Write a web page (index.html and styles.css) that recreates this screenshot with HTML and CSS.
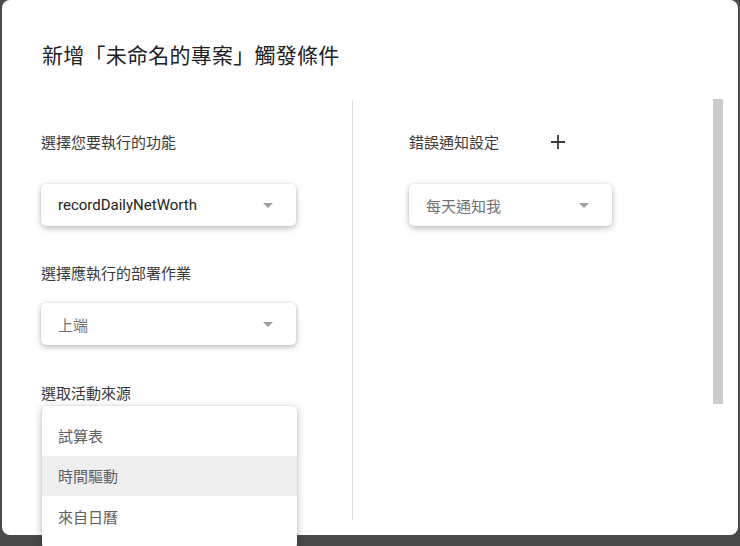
FILE: index.html
```html
<!DOCTYPE html>
<html lang="zh-Hant">
<head>
<meta charset="utf-8">
<link rel="stylesheet" href="styles.css">
</head>
<body>
<div class="dialog">
  <h1 class="title">新增「未命名的專案」觸發條件</h1>
  <div class="body">
    <div class="col left">
      <div class="label l1">選擇您要執行的功能</div>
      <div class="select s1"><span class="value dark">recordDailyNetWorth</span><span class="arrow"></span></div>
      <div class="label l2">選擇應執行的部署作業</div>
      <div class="select s2"><span class="value">上端</span><span class="arrow"></span></div>
      <div class="label l3">選取活動來源</div>
      <div class="menu-anchor">
        <div class="menu">
          <div class="item">試算表</div>
          <div class="item active">時間驅動</div>
          <div class="item">來自日曆</div>
        </div>
      </div>
    </div>
    <div class="col right">
      <div class="label-row">
        <div class="label">錯誤通知設定</div>
        <svg class="plus" width="16" height="16" viewBox="0 0 16 16"><path d="M8 1v14M1 8h14" stroke="#3c3c3c" stroke-width="1.8" fill="none"/></svg>
      </div>
      <div class="select s3"><span class="value">每天通知我</span><span class="arrow"></span></div>
    </div>
    <div class="scrollbar"></div>
  </div>
</div>
</body>
</html>
```
FILE: styles.css
```css
html, body {
  margin: 0;
  padding: 0;
  background: #4a4a4a;
  height: 546px;
  overflow: hidden;
  font-family: Roboto, "Noto Sans CJK TC", sans-serif;
}
.dialog {
  position: relative;
  margin-left: 2px;
  width: 736px;
  height: 535px;
  background: #fff;
  border-radius: 8px;
  box-sizing: border-box;
}
.title {
  margin: 0;
  padding: 40px 0 0 40px;
  font-size: 21px;
  letter-spacing: 0.25px;
  line-height: 28px;
  font-weight: 400;
  color: #202124;
  font-family: "Noto Sans CJK TC", sans-serif;
}
.body {
  display: flex;
  margin-top: 32px;
  padding-left: 39px;
}
.col {
  height: 420px;
  box-sizing: border-box;
}
.left {
  width: 312px;
  border-right: 1px solid #dedede;
  padding-top: 32px;
}
.right {
  flex: 1;
  padding-top: 32px;
  padding-left: 56px;
}
.label {
  font-family: "Noto Sans CJK TC", sans-serif;
  font-size: 15px;
  line-height: 20px;
  color: #3a3a3a;
}
.l2 { margin-top: 37px; }
.l3 { margin-top: 38px; }
.select {
  display: flex;
  align-items: center;
  justify-content: space-between;
  box-sizing: border-box;
  height: 42px;
  padding: 0 23px 0 17px;
  background: #fff;
  border-radius: 5px;
  box-shadow: 0 2px 6px rgba(0, 0, 0, 0.28), 0 0 2px rgba(0, 0, 0, 0.08);
}
.s1 { width: 255px; margin-top: 32px; }
.s2 { width: 255px; margin-top: 20px; }
.s3 { width: 203px; margin-top: 32px; }
.value {
  font-size: 15px;
  color: #707070;
}
.value.dark { color: #212121; }
.arrow {
  width: 0;
  height: 0;
  border-left: 5px solid transparent;
  border-right: 5px solid transparent;
  border-top: 5px solid #a0a0a0;
}
.label-row {
  display: flex;
  align-items: center;
  gap: 51px;
}
.plus { display: block; }
.menu-anchor {
  position: relative;
}
.menu {
  position: absolute;
  left: 1px;
  top: 3px;
  width: 255px;
  background: #fff;
  border-radius: 5px;
  padding: 9px 0 12px;
  box-shadow: 0 2px 8px rgba(0, 0, 0, 0.28), 0 0 2px rgba(0, 0, 0, 0.08);
  z-index: 2;
}
.item {
  height: 41px;
  line-height: 41px;
  padding-left: 16px;
  font-family: "Noto Sans CJK TC", sans-serif;
  font-size: 15px;
  color: #606060;
}
.item.active { background: #eeeeee; height: 40px; line-height: 40px; }
.scrollbar {
  width: 10px;
  height: 305px;
  margin-top: -1px;
  margin-right: 15px;
  background: #cbcbcb;
}
```
